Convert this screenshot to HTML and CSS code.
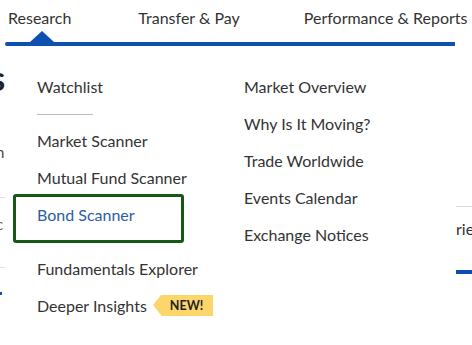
FILE: index.html
```html
<!DOCTYPE html>
<html lang="en">
<head>
<meta charset="utf-8">
<title>Research menu</title>
<link rel="stylesheet" href="styles.css">
</head>
<body>
<div class="page">
  <nav class="tabs">
    <a class="tab tab-active">Research</a>
    <a class="tab tab-transfer">Transfer &amp; Pay</a>
    <a class="tab tab-perf">Performance &amp; Reports</a>
  </nav>
  <div class="bar"></div>
  <div class="stage">
    <div class="edge edge-left">
      <span class="edge-big">ks</span>
      <span class="edge-n">n</span>
      <span class="edge-line"></span>
      <span class="edge-c">c</span>
      <span class="edge-line edge-line2"></span>
      <span class="edge-dot"></span>
    </div>
    <div class="menu">
      <ul class="col col-left">
        <li class="item">Watchlist</li>
        <li class="divider"></li>
        <li class="item">Market Scanner</li>
        <li class="item">Mutual Fund Scanner</li>
        <li class="item item-focus"><span>Bond Scanner</span></li>
        <li class="item">Fundamentals Explorer</li>
        <li class="item">Deeper Insights <span class="badge">NEW!</span></li>
      </ul>
      <ul class="col col-right">
        <li class="item">Market Overview</li>
        <li class="item">Why Is It Moving?</li>
        <li class="item">Trade Worldwide</li>
        <li class="item">Events Calendar</li>
        <li class="item">Exchange Notices</li>
      </ul>
    </div>
    <div class="edge edge-right">
      <span class="edge-rline"></span>
      <span class="edge-rie">rie</span>
      <span class="edge-rbar"></span>
    </div>
  </div>
</div>
</body>
</html>
```

FILE: styles.css
```css
* { box-sizing: border-box; }
html, body { margin: 0; padding: 0; background: #fff; }
body {
  font-family: Lato, "Open Sans", Arial, sans-serif;
  color: #333;
  width: 472px;
  height: 345px;
  overflow: hidden;
}
.page { width: 472px; }

.tabs {
  display: flex;
  height: 42px;
  align-items: center;
  padding-left: 8px;
  padding-bottom: 7px;
  white-space: nowrap;
  font-size: 16px;
  color: #333;
}
.tab { display: block; }
.tab-transfer { margin-left: 67px; }
.tab-perf { margin-left: 64px; }

.bar {
  position: relative;
  margin-left: 5px;
  width: 450px;
  height: 4px;
  background: #0d50b2;
  border-radius: 2px 0 0 2px;
}
.bar::before {
  content: "";
  position: absolute;
  left: 25px;
  bottom: 4px;
  border-left: 12px solid transparent;
  border-right: 12px solid transparent;
  border-bottom: 11px solid #0d50b2;
}

.stage {
  display: flex;
  height: 299px;
}

.edge {
  display: flex;
  flex-direction: column;
  overflow: hidden;
  position: relative;
}
.edge-left { width: 5px; }
.edge-big {
  display: block;
  font-size: 34px;
  font-weight: 700;
  color: #222;
  line-height: 30px;
  margin-top: 17px;
  margin-left: -28px;
  white-space: nowrap;
}
.edge-n {
  display: block;
  font-size: 15px;
  color: #444;
  margin-top: 50px;
  margin-left: -4px;
  line-height: 18px;
}
.edge-line {
  display: block;
  height: 1px;
  width: 5px;
  background: #ddd;
  margin-top: 36px;
}
.edge-c {
  display: block;
  font-size: 15px;
  color: #666;
  margin-top: 17px;
  margin-left: -4px;
  line-height: 18px;
}
.edge-line2 { margin-top: 34px; }
.edge-dot {
  display: block;
  width: 2px;
  height: 3px;
  background: #0d50b2;
  margin-top: 24px;
}

.menu {
  width: 450px;
  background: #fff;
  display: flex;
  padding: 22px 0 0 32px;
}
.col {
  list-style: none;
  margin: 0;
  padding: 0;
}
.col-left { width: 207px; }
.item {
  font-size: 16px;
  line-height: 37px;
  height: 37px;
  white-space: nowrap;
  display: flex;
  align-items: center;
  color: #333;
}
.divider {
  width: 56px;
  height: 1px;
  background: #bbb;
  margin: 9px 0 7px;
}
.item-focus {
  margin: -2px 0 7px -24px;
  width: 171px;
  height: 49px;
  border: 3px solid #175717;
  border-radius: 3px;
  padding: 0 0 9px 21px;
  color: #2c5da6;
}
.badge {
  position: relative;
  display: inline-block;
  margin-left: 14px;
  height: 21px;
  line-height: 21px;
  padding: 0 10px 0 9px;
  background: #fcd66a;
  font-size: 12.5px;
  font-weight: 700;
  color: #222;
}
.badge::before {
  content: "";
  position: absolute;
  left: -8px;
  top: 0;
  border-top: 10.5px solid transparent;
  border-bottom: 10.5px solid transparent;
  border-right: 8px solid #fcd66a;
}

.edge-right { width: 17px; padding-left: 1px; }
.edge-rline {
  display: block;
  height: 1px;
  background: #ddd;
  margin-top: 160px;
}
.edge-rie {
  display: block;
  font-size: 16px;
  color: #333;
  line-height: 18px;
  margin-top: 13px;
  white-space: nowrap;
}
.edge-rbar {
  display: block;
  height: 4px;
  background: #0d50b2;
  margin-top: 32px;
}
```
